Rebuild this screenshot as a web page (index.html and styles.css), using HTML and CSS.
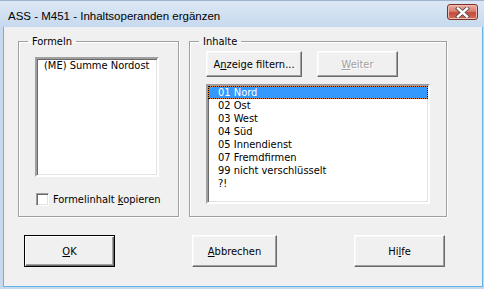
FILE: index.html
```html
<!DOCTYPE html>
<html lang="de">
  <head>
    <meta charset="utf-8" />
    <title>ASS - M451 - Inhaltsoperanden ergänzen</title>
    <link rel="stylesheet" href="styles.css">
  </head>
  <body>
    <div class="window">
      <div class="titlebar">
        <span class="title">ASS - M451 - Inhaltsoperanden ergänzen</span>
        <button class="close" title="Schließen">
          <svg width="15" height="11" viewBox="0 0 15 11">
            <path d="M3 1.5 L12 9.5 M12 1.5 L3 9.5" stroke="#4a4a4a" stroke-width="4" stroke-linecap="square" fill="none"/>
            <path d="M3 1.5 L12 9.5 M12 1.5 L3 9.5" stroke="#fff" stroke-width="2.4" stroke-linecap="square" fill="none"/>
          </svg>
        </button>
      </div>

      <div class="client">
        <div class="groups">
          <fieldset class="group formeln">
            <legend>Formeln</legend>
            <ul class="listbox">
              <li>(ME) Summe Nordost</li>
            </ul>
            <label class="check">
              <span class="box"></span>
              <span>Formelinhalt <u>k</u>opieren</span>
            </label>
          </fieldset>

          <fieldset class="group inhalte">
            <legend>Inhalte</legend>
            <div class="toolbar">
              <button class="btn filter">A<u>n</u>zeige filtern...</button>
              <button class="btn weiter" disabled><u>W</u>eiter</button>
            </div>
            <ul class="listbox">
              <li class="selected">01 Nord</li>
              <li>02 Ost</li>
              <li>03 West</li>
              <li>04 Süd</li>
              <li>05 Innendienst</li>
              <li>07 Fremdfirmen</li>
              <li>99 nicht verschlüsselt</li>
              <li>?!</li>
            </ul>
          </fieldset>
        </div>

        <div class="actions">
          <button class="btn default"><u>O</u>K</button>
          <button class="btn cancel"><u>A</u>bbrechen</button>
          <button class="btn help">Hi<u>l</u>fe</button>
        </div>
      </div>
    </div>
  </body>
</html>
```

FILE: styles.css
```css
body {
  margin: 0;
  font-family: 'DejaVu Sans Condensed', 'Liberation Sans', sans-serif;
  font-size: 11px;
  color: #000;
}

.window {
  width: 484px;
  height: 289px;
  box-sizing: border-box;
  display: flex;
  flex-direction: column;
  background: linear-gradient(#dce7f4, #c6d9ef 27px, #c6d9ef);
  border-top: 1px solid #9db5d2;
}

.titlebar {
  height: 26px;
  display: flex;
  align-items: center;
  padding: 0 6px 0 8px;
}
.titlebar .title {
  flex: 1;
  font-family: 'Liberation Sans', Arial, sans-serif;
  font-size: 11.5px;
  margin-top: 3px;
}
.titlebar .close {
  width: 31px;
  height: 16px;
  margin-top: -4px;
  padding: 0;
  display: flex;
  align-items: center;
  justify-content: center;
  border: 1px solid #7a3027;
  border-radius: 3px;
  background: linear-gradient(#e9ad9f, #d9806f 45%, #c5483a 55%, #d2705c);
  box-shadow: inset 0 0 0 1px #f0bdb2;
}

.client {
  flex: 1;
  margin: 0 1px 2px 3px;
  background: #f0f0f0;
  border: 1px solid #62b4e6;
  border-top: none;
  padding: 8px 0 0 14px;
}

.groups {
  display: grid;
  grid-template-columns: 161px 258px;
  column-gap: 10px;
}

/* etched group box */
.group {
  margin: 0;
  height: 182px;
  box-sizing: border-box;
  border: 1px solid #a0a0a0;
  box-shadow: inset 1px 1px 0 #fff, 1px 1px 0 #fff;
  padding: 9px 0 0 16px;
}
.group legend {
  margin-left: -7px;
  padding: 0 4px;
  line-height: 13px;
}
.inhalte {
  padding-top: 3px;
}

.listbox {
  list-style: none;
  margin: 0;
  padding: 0;
  background: #fff;
  border: 2px solid;
  border-color: #a0a0a0 #fff #fff #a0a0a0;
  box-shadow: inset 1px 1px 0 #696969, inset -1px -1px 0 #e3e3e3;
  box-sizing: border-box;
}
.listbox li {
  height: 13px;
  line-height: 13px;
  padding-left: 9px;
  border: 1px solid transparent;
  border-width: 0 1px;
  white-space: nowrap;
}
.listbox li.selected {
  color: #fff;
  border: 1px dotted #000;
  line-height: 11px;
  height: 11px;
  background: linear-gradient(#3399ff, #3399ff) padding-box, #e8842a border-box;
}
.formeln .listbox {
  width: 124px;
  height: 120px;
}
.formeln .listbox li {
  padding-left: 6px;
}
.inhalte .listbox {
  width: 224px;
  height: 120px;
}

.check {
  display: flex;
  align-items: center;
  gap: 4px;
  margin: 15px 0 0 1px;
  height: 14px;
}
.check .box {
  width: 13px;
  height: 13px;
  box-sizing: border-box;
  background: #fff;
  border: 1px solid;
  border-color: #a0a0a0 #fff #fff #a0a0a0;
  box-shadow: inset 1px 1px 0 #696969, inset -1px -1px 0 #e3e3e3;
}

/* classic 3D push button */
.btn {
  font: inherit;
  color: #000;
  background: #f0f0f0;
  padding: 0;
  border: 1px solid;
  border-color: #fff #696969 #696969 #fff;
  box-shadow: inset -1px -1px 0 #a0a0a0, inset 1px 1px 0 #f8f8f8;
  box-sizing: border-box;
}
.btn:disabled {
  color: #a0a0a0;
  text-shadow: 1px 1px 0 #fff;
}

.toolbar {
  display: flex;
  gap: 15px;
  margin-bottom: 7px;
}
.toolbar .btn {
  height: 26px;
}
.toolbar .filter {
  width: 96px;
}
.toolbar .weiter {
  width: 81px;
}

.actions {
  display: flex;
  gap: 77px;
  margin: 18px 0 0 6px;
}
.actions .btn {
  height: 32px;
  width: 85px;
}
.actions .default {
  width: 91px;
  border: 1px solid #000;
  box-shadow: inset 1px 1px 0 #fff, inset -1px -1px 0 #696969, inset -2px -2px 0 #a0a0a0;
}
.actions .help {
  width: 91px;
}
```
